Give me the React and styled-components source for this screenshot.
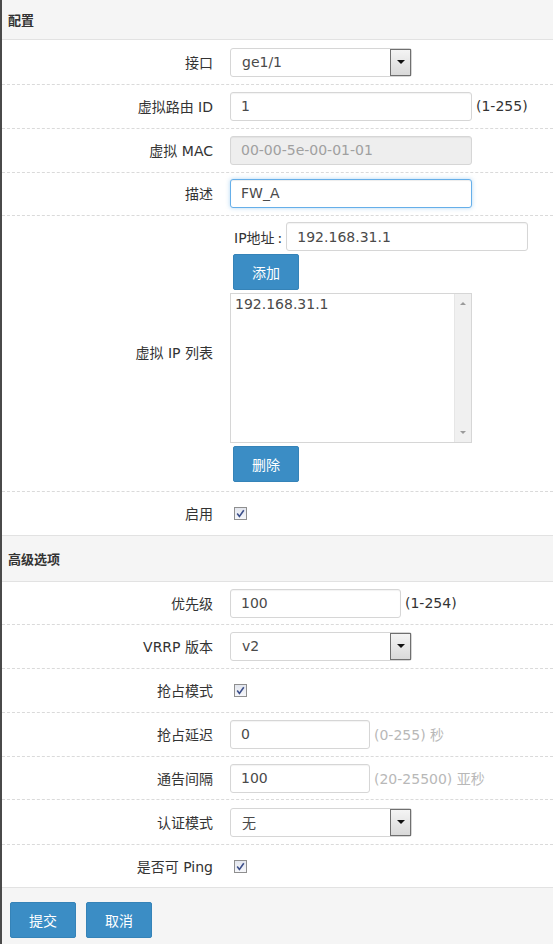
import React from 'react';
import styled, { createGlobalStyle } from 'styled-components';

const GlobalStyle = createGlobalStyle`
  html, body {
    margin: 0;
    padding: 0;
    background: #fff;
  }
  body {
    font-family: "DejaVu Sans", "Noto Sans CJK SC", sans-serif;
    font-size: 14px;
    color: #333;
  }
`;

const Panel = styled.div`
  width: 553px;
  height: 944px;
  box-sizing: border-box;
  border-left: 2px solid #4a4a4a;
  background: #fff;
  overflow: hidden;
`;

const SectionHead = styled.div`
  height: ${(p) => (p.$top ? 45 : 39)}px;
  display: flex;
  align-items: center;
  padding-left: 6px;
  background: #f5f5f5;
  border-bottom: 1px solid #e2e2e2;
  border-top: ${(p) => (p.$top ? '1px solid #e2e2e2' : 'none')};
  font-family: "Noto Sans CJK SC", sans-serif;
  font-weight: bold;
  font-size: 13px;
  color: #333;
`;

const Rows = styled.div`
  display: flex;
  flex-direction: column;
`;

const Row = styled.div`
  display: grid;
  grid-template-columns: 211px 1fr;
  column-gap: 17px;
  align-items: center;
  min-height: 30px;
  padding: ${(p) => p.$pad || '6px 0 7px'};
  border-bottom: 1px dashed #dadada;

  &:last-child {
    border-bottom: none;
  }
`;

const Label = styled.div`
  text-align: right;
  color: #333;
  font-size: 14px;
`;

const Field = styled.div`
  display: flex;
  align-items: center;
  gap: 4px;
`;

const Input = styled.div`
  box-sizing: border-box;
  width: ${(p) => p.$w}px;
  height: 29px;
  display: flex;
  align-items: center;
  padding-left: 10px;
  border: 1px solid ${(p) => (p.$focus ? '#66afe9' : '#d6d6d6')};
  border-radius: 3px;
  background: ${(p) => (p.$disabled ? '#eeeeee' : '#fff')};
  color: ${(p) => (p.$disabled ? '#a0a0a0' : '#4a4a4a')};
  box-shadow: ${(p) =>
    p.$focus ? 'inset 0 1px 1px rgba(0,0,0,.075), 0 0 4px rgba(102,175,233,.5)' : 'inset 0 1px 1px rgba(0,0,0,.05)'};
  font-size: 14px;
`;

const Hint = styled.span`
  color: ${(p) => (p.$muted ? '#b8b8b8' : '#333')};
  font-size: 14px;
  white-space: nowrap;
`;

const SelectBox = styled.div`
  box-sizing: border-box;
  width: 182px;
  height: 29px;
  display: flex;
  align-items: stretch;
  border: 1px solid #d6d6d6;
  border-radius: 3px;
  background: #fff;
  color: #4a4a4a;
`;

const SelectValue = styled.div`
  flex: 1;
  display: flex;
  align-items: center;
  padding-left: 11px;
`;

const SelectArrow = styled.div`
  width: 21px;
  box-sizing: border-box;
  border: 1px solid #6f6f6f;
  background: linear-gradient(#f4f4f4, #d9d9d9);
  display: flex;
  align-items: center;
  justify-content: center;

  &::after {
    content: '';
    border-left: 4px solid transparent;
    border-right: 4px solid transparent;
    border-top: 4px solid #111;
  }
`;

const Check = styled.div`
  width: 13px;
  height: 13px;
  margin-left: 4px;
  box-sizing: border-box;
  border: 1px solid #8f8f8f;
  background: linear-gradient(#e3e6ee, #f6f7fa);
  display: flex;
  align-items: center;
  justify-content: center;
`;

const Stack = styled.div`
  display: flex;
  flex-direction: column;
  align-items: flex-start;
  gap: 3px;
`;

const IpLine = styled.div`
  display: flex;
  align-items: center;
  gap: 4px;
  padding-left: 4px;
`;

const Colon = styled.span`
  margin-left: 3px;
`;

const Button = styled.button`
  height: 36px;
  padding: 0 18px;
  margin-left: ${(p) => p.$ml || 0}px;
  border: 1px solid #3583b8;
  border-radius: 2px;
  background: #3b8dc5;
  color: #fff;
  font-family: "Noto Sans CJK SC", sans-serif;
  font-size: 14px;
`;

const ListBox = styled.div`
  box-sizing: border-box;
  width: 242px;
  height: 150px;
  display: flex;
  border: 1px solid #d6d6d6;
  background: #fff;
  color: #4a4a4a;
`;

const ListItems = styled.div`
  flex: 1;
  padding: 2px 4px;
`;

const Scroll = styled.div`
  width: 16px;
  background: #f0f0f0;
  border-left: 1px solid #e6e6e6;
  display: flex;
  flex-direction: column;
  justify-content: space-between;
  align-items: center;
  padding: 8px 0;
`;

const Tri = styled.span`
  border-left: 3px solid transparent;
  border-right: 3px solid transparent;
  ${(p) => (p.$down ? 'border-top: 3px solid #9a9a9a;' : 'border-bottom: 3px solid #9a9a9a;')}
`;

const Footer = styled.div`
  border-top: 1px solid #e2e2e2;
  background: #f5f5f5;
  padding: 14px 8px 20px;
  display: flex;
  gap: 10px;
`;

function CheckMark() {
  return (
    <Check>
      <svg width="9" height="9" viewBox="0 0 9 9">
        <path d="M1.2 4.6 L3.4 7.4 L7.8 1.2" fill="none" stroke="#3c4f8a" strokeWidth="1.6" />
      </svg>
    </Check>
  );
}

function Select({ value }) {
  return (
    <SelectBox>
      <SelectValue>{value}</SelectValue>
      <SelectArrow />
    </SelectBox>
  );
}

export default function App() {
  return (
    <Panel>
      <GlobalStyle />
      <SectionHead>配置</SectionHead>
      <Rows>
        <Row $pad="7px 0 7px">
          <Label>接口</Label>
          <Field>
            <Select value="ge1/1" />
          </Field>
        </Row>
        <Row>
          <Label>虚拟路由 ID</Label>
          <Field>
            <Input $w={242}>1</Input>
            <Hint>(1-255)</Hint>
          </Field>
        </Row>
        <Row>
          <Label>虚拟 MAC</Label>
          <Field>
            <Input $w={242} $disabled>00-00-5e-00-01-01</Input>
          </Field>
        </Row>
        <Row $pad="5px 0 7px">
          <Label>描述</Label>
          <Field>
            <Input $w={242} $focus>FW_A</Input>
          </Field>
        </Row>
        <Row $pad="6px 0 9px">
          <Label>虚拟 IP 列表</Label>
          <Stack>
            <IpLine>
              <span>
                IP地址<Colon>:</Colon>
              </span>
              <Input $w={242}>192.168.31.1</Input>
            </IpLine>
            <Button $ml={3}>添加</Button>
            <ListBox>
              <ListItems>192.168.31.1</ListItems>
              <Scroll>
                <Tri />
                <Tri $down />
              </Scroll>
            </ListBox>
            <Button $ml={3}>删除</Button>
          </Stack>
        </Row>
        <Row>
          <Label>启用</Label>
          <Field>
            <CheckMark />
          </Field>
        </Row>
      </Rows>
      <SectionHead $top>高级选项</SectionHead>
      <Rows>
        <Row $pad="6px 0 6px">
          <Label>优先级</Label>
          <Field>
            <Input $w={171}>100</Input>
            <Hint>(1-254)</Hint>
          </Field>
        </Row>
        <Row>
          <Label>VRRP 版本</Label>
          <Field>
            <Select value="v2" />
          </Field>
        </Row>
        <Row>
          <Label>抢占模式</Label>
          <Field>
            <CheckMark />
          </Field>
        </Row>
        <Row>
          <Label>抢占延迟</Label>
          <Field>
            <Input $w={140}>0</Input>
            <Hint $muted>(0-255) 秒</Hint>
          </Field>
        </Row>
        <Row $pad="6px 0 6px">
          <Label>通告间隔</Label>
          <Field>
            <Input $w={140}>100</Input>
            <Hint $muted>(20-25500) 亚秒</Hint>
          </Field>
        </Row>
        <Row $pad="7px 0 7px">
          <Label>认证模式</Label>
          <Field>
            <Select value="无" />
          </Field>
        </Row>
        <Row $pad="6px 0 6px">
          <Label>是否可 Ping</Label>
          <Field>
            <CheckMark />
          </Field>
        </Row>
      </Rows>
      <Footer>
        <Button>提交</Button>
        <Button>取消</Button>
      </Footer>
    </Panel>
  );
}
